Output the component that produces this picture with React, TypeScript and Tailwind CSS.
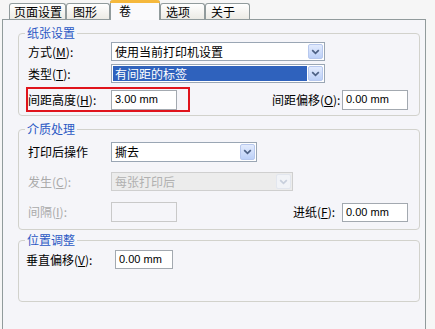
import React from "react";

const FONT = { fontFamily: '"Noto Sans CJK SC", "Noto Sans", sans-serif' };

function Chevron({ disabled }: { disabled?: boolean }) {
  return (
    <svg width="9" height="6" viewBox="0 0 9 6" className="block">
      <path
        d="M1.2 1.2 L4.5 4.4 L7.8 1.2"
        fill="none"
        stroke={disabled ? "#c8cfdc" : "#4d6185"}
        strokeWidth="1.7"
      />
    </svg>
  );
}

function DropBtn({ disabled }: { disabled?: boolean }) {
  return (
    <div
      className={
        "w-[15px] h-full flex items-center justify-center rounded-[2px] border " +
        (disabled
          ? "border-[#e2e6ee] bg-[#f1f3f7]"
          : "border-[#b7c8ee] bg-gradient-to-b from-[#e3ebfd] to-[#bcd0f8]")
      }
    >
      <Chevron disabled={disabled} />
    </div>
  );
}

function Select({
  w,
  h,
  text,
  selected,
  disabled,
}: {
  w: string;
  h: string;
  text: string;
  selected?: boolean;
  disabled?: boolean;
}) {
  return (
    <div
      className={
        "flex items-stretch border p-px " +
        w +
        " " +
        h +
        " " +
        (disabled ? "border-[#cfcfcf] bg-[#ececec]" : "border-[#9aa6b4] bg-white")
      }
    >
      <div
        className={
          "flex-1 flex items-center pl-[2px] text-[12px] leading-none mr-[1px] " +
          (selected ? "bg-[#2f62bd] text-white" : disabled ? "text-[#b0b0b0]" : "text-black")
        }
      >
        {text}
      </div>
      <DropBtn disabled={disabled} />
    </div>
  );
}

function Input({
  w,
  h,
  value,
  disabled,
}: {
  w: string;
  h: string;
  value?: string;
  disabled?: boolean;
}) {
  return (
    <div
      className={
        "flex items-center pl-[3px] border text-[11px] leading-none " +
        w +
        " " +
        h +
        " " +
        (disabled ? "border-[#c9c9c9] bg-transparent" : "border-[#a3a9b0] bg-white text-black")
      }
      style={{ fontFamily: '"Liberation Sans", "Noto Sans", sans-serif' }}
    >
      {value}
    </div>
  );
}

function Label({
  cjk,
  key1,
  w,
  disabled,
}: {
  cjk: string;
  key1?: string;
  w?: string;
  disabled?: boolean;
}) {
  return (
    <div
      className={
        "text-[12px] leading-none shrink-0 " +
        (w ?? "") +
        " " +
        (disabled ? "text-[#aaaaaa]" : "text-black")
      }
    >
      {cjk}
      {key1 ? (
        <>
          (<u>{key1}</u>):
        </>
      ) : null}
    </div>
  );
}

function Group({
  title,
  className,
  children,
}: {
  title: string;
  className: string;
  children: React.ReactNode;
}) {
  return (
    <div className={"relative border border-[#d2d2cc] rounded-[4px] " + className}>
      <div className="absolute -top-[9px] left-[6px] px-[2px] bg-[#f5f5f9] text-[12px] leading-[16px] text-[#2a58c4]">
        {title}
      </div>
      {children}
    </div>
  );
}

function Tab({
  label,
  w,
  pl,
  selected,
}: {
  label: string;
  w: string;
  pl: string;
  selected?: boolean;
}) {
  if (selected) {
    return (
      <div
        className={
          "relative z-10 -mb-px h-[20px] border-x border-[#919b9c] bg-[#fafafc] rounded-t-[3px] text-[12px] leading-none flex flex-col " +
          w
        }
      >
        <div className="h-[3px] rounded-t-[3px] bg-[#f5b83c] -mx-px" />
        <div className={"pt-[2px] " + pl}>{label}</div>
      </div>
    );
  }
  return (
    <div
      className={
        "h-[16px] border-x border-t border-[#919b9c] rounded-t-[3px] bg-gradient-to-b from-[#ffffff] to-[#ecebe5] text-[12px] leading-none flex items-center " +
        w +
        " " +
        pl
      }
    >
      {label}
    </div>
  );
}

export default function App() {
  return (
    <div className="w-[435px] h-[329px] overflow-hidden bg-[#f6f6f6] text-black" style={FONT}>
      {/* tabs */}
      <div className="flex items-end h-[19px] pl-[9px]">
        <Tab label="页面设置" w="w-[57px]" pl="pl-[4px]" />
        <Tab label="图形" w="w-[44px]" pl="pl-[6px]" />
        <Tab label="卷" w="w-[50px]" pl="pl-[8px]" selected />
        <Tab label="选项" w="w-[45px]" pl="pl-[5px]" />
        <Tab label="关于" w="w-[45px]" pl="pl-[5px]" />
      </div>

      {/* panel */}
      <div className="ml-[2px] w-[424px] h-[320px] border border-[#919b9c] bg-[#f5f5f9] pl-[15px] pr-[5px] pt-[13px] flex flex-col">
        {/* 纸张设置 */}
        <Group title="纸张设置" className="h-[83px] pt-[8px] flex flex-col">
          <div className="flex items-center h-[19px] pl-[9px]">
            <Label cjk="方式" key1="M" w="w-[83px]" />
            <Select w="w-[214px]" h="h-[19px]" text="使用当前打印机设置" />
          </div>
          <div className="flex items-center h-[19px] pl-[9px] mt-[3px]">
            <Label cjk="类型" key1="T" w="w-[83px]" />
            <Select w="w-[214px]" h="h-[19px]" text="有间距的标签" selected />
          </div>
          <div className="flex items-center justify-between h-[25px] mt-[4px] pl-[7px] pr-[11px]">
            <div className="flex items-center w-[164px] h-[25px] border-2 border-[#e0141c]">
              <Label cjk="间距高度" key1="H" w="w-[83px]" />
              <Input w="w-[66px]" h="h-[20px]" value="3.00 mm" />
            </div>
            <div className="flex items-center">
              <Label cjk="间距偏移" key1="O" w="w-[70px]" />
              <Input w="w-[66px]" h="h-[20px]" value="0.00 mm" />
            </div>
          </div>
        </Group>

        {/* 介质处理 */}
        <Group title="介质处理" className="mt-[13px] h-[101px] pt-[12px] flex flex-col">
          <div className="flex items-center h-[20px] pl-[9px]">
            <Label cjk="打印后操作" w="w-[83px]" />
            <Select w="w-[146px]" h="h-[20px]" text="撕去" />
          </div>
          <div className="flex items-center h-[19px] pl-[9px] mt-[10px]">
            <Label cjk="发生" key1="C" w="w-[83px]" disabled />
            <Select w="w-[182px]" h="h-[19px]" text="每张打印后" disabled />
          </div>
          <div className="flex items-center justify-between h-[20px] pl-[9px] pr-[11px] mt-[11px]">
            <div className="flex items-center">
              <Label cjk="间隔" key1="I" w="w-[83px]" disabled />
              <Input w="w-[66px]" h="h-[20px]" disabled />
            </div>
            <div className="flex items-center">
              <Label cjk="进纸" key1="F" w="w-[49px]" />
              <Input w="w-[66px]" h="h-[19px]" value="0.00 mm" />
            </div>
          </div>
        </Group>

        {/* 位置调整 */}
        <Group title="位置调整" className="mt-[10px] h-[62px] pt-[9px] flex flex-col">
          <div className="flex items-center h-[19px] pl-[7px]">
            <Label cjk="垂直偏移" key1="V" w="w-[89px]" />
            <Input w="w-[58px]" h="h-[19px]" value="0.00 mm" />
          </div>
        </Group>
      </div>
    </div>
  );
}
